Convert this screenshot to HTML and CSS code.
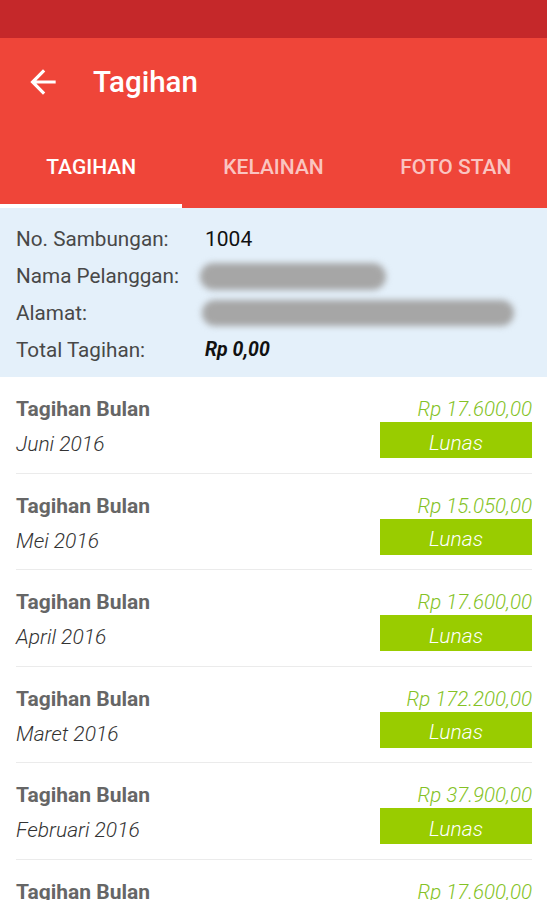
FILE: index.html
```html
<!DOCTYPE html>
<html lang="id">
<head>
    <meta charset="UTF-8">
    <meta name="viewport" content="width=device-width, initial-scale=1.0">
    <title>Tagihan</title>
    <link rel="stylesheet" href="styles.css">
</head>
<body>
    <div class="status-bar"></div>

    <div class="app-bar">
        <div class="toolbar">
            <svg class="back" viewBox="0 0 24 24" width="38" height="38">
                <path d="M20 11H7.83l5.59-5.59L12 4l-8 8 8 8 1.41-1.41L7.83 13H20v-2z" fill="#fff"/>
            </svg>
            <span class="title">Tagihan</span>
        </div>
        <div class="tabs">
            <div class="tab active">TAGIHAN</div>
            <div class="tab">KELAINAN</div>
            <div class="tab">FOTO STAN</div>
        </div>
    </div>

    <div class="info">
        <div class="info-row">
            <span class="label">No. Sambungan:</span>
            <span class="value">1004</span>
        </div>
        <div class="info-row">
            <span class="label">Nama Pelanggan:</span>
            <span class="blur blur-name"></span>
        </div>
        <div class="info-row">
            <span class="label">Alamat:</span>
            <span class="blur blur-addr"></span>
        </div>
        <div class="info-row">
            <span class="label">Total Tagihan:</span>
            <span class="value total">Rp 0,00</span>
        </div>
    </div>

    <div class="bills">
        <div class="bill">
            <div class="bill-left">
                <div class="bill-title">Tagihan Bulan</div>
                <div class="bill-month">Juni 2016</div>
            </div>
            <div class="bill-right">
                <div class="amount">Rp 17.600,00</div>
                <div class="status">Lunas</div>
            </div>
        </div>
        <div class="bill">
            <div class="bill-left">
                <div class="bill-title">Tagihan Bulan</div>
                <div class="bill-month">Mei 2016</div>
            </div>
            <div class="bill-right">
                <div class="amount">Rp 15.050,00</div>
                <div class="status">Lunas</div>
            </div>
        </div>
        <div class="bill">
            <div class="bill-left">
                <div class="bill-title">Tagihan Bulan</div>
                <div class="bill-month">April 2016</div>
            </div>
            <div class="bill-right">
                <div class="amount">Rp 17.600,00</div>
                <div class="status">Lunas</div>
            </div>
        </div>
        <div class="bill">
            <div class="bill-left">
                <div class="bill-title">Tagihan Bulan</div>
                <div class="bill-month">Maret 2016</div>
            </div>
            <div class="bill-right">
                <div class="amount">Rp 172.200,00</div>
                <div class="status">Lunas</div>
            </div>
        </div>
        <div class="bill">
            <div class="bill-left">
                <div class="bill-title">Tagihan Bulan</div>
                <div class="bill-month">Februari 2016</div>
            </div>
            <div class="bill-right">
                <div class="amount">Rp 37.900,00</div>
                <div class="status">Lunas</div>
            </div>
        </div>
        <div class="bill">
            <div class="bill-left">
                <div class="bill-title">Tagihan Bulan</div>
                <div class="bill-month">Januari 2016</div>
            </div>
            <div class="bill-right">
                <div class="amount">Rp 17.600,00</div>
                <div class="status">Lunas</div>
            </div>
        </div>
    </div>
</body>
</html>
```

FILE: styles.css
```css
html, body {
    margin: 0;
    padding: 0;
    height: 900px;
    overflow: hidden;
}
body {
    font-family: Roboto, "Noto Sans", sans-serif;
    background-color: #fff;
}
.status-bar {
    height: 38px;
    background-color: #c5282a;
}
.app-bar {
    background-color: #ef4539;
    color: #fff;
}
.toolbar {
    height: 87px;
    display: flex;
    align-items: center;
    padding-left: 24px;
}
.back {
    display: block;
}
.title {
    font-size: 29.5px;
    font-weight: 500;
    margin-left: 31px;
}
.tabs {
    display: flex;
    height: 83px;
}
.tab {
    flex: 1;
    display: flex;
    align-items: center;
    justify-content: center;
    font-size: 21px;
    font-weight: 500;
    color: rgba(255, 255, 255, 0.7);
    border-bottom: 4px solid transparent;
    box-sizing: border-box;
    padding-top: 5px;
}
.tab.active {
    color: #fff;
    border-bottom-color: #fff;
}
.info {
    background-color: #e4f0fa;
    padding: 13px 16px 9px;
}
.info-row {
    display: flex;
    align-items: center;
    height: 36.75px;
}
.label {
    width: 189px;
    font-size: 20.7px;
    color: #484848;
}
.value {
    font-size: 21px;
    color: #111;
}
.total {
    font-size: 19.5px;
    font-weight: 700;
    font-style: italic;
}
.blur {
    display: block;
    background-color: #a6a6a6;
    border-radius: 14px;
    filter: blur(3px);
}
.blur-name {
    width: 186px;
    height: 27px;
    margin-left: -5px;
}
.blur-addr {
    width: 312px;
    height: 26px;
    margin-left: -3px;
    margin-top: 1px;
}
.bills {
    padding: 0 15px 0 16px;
}
.bill {
    display: flex;
    justify-content: space-between;
    height: 96.5px;
    border-bottom: 1px solid #ebebeb;
    padding-top: 20px;
    box-sizing: border-box;
}
.bill-title {
    font-size: 21px;
    font-weight: 700;
    color: #666;
    line-height: 24px;
}
.bill-month {
    font-size: 21px;
    font-weight: 300;
    font-style: italic;
    color: #333;
    margin-top: 11px;
    line-height: 24px;
}
.bill-right {
    display: flex;
    flex-direction: column;
    align-items: flex-end;
}
.amount {
    font-size: 20.5px;
    font-weight: 300;
    font-style: italic;
    color: #84c225;
    line-height: 24px;
}
.status {
    width: 152px;
    height: 36px;
    margin-top: 1px;
    padding-top: 5px;
    box-sizing: border-box;
    background-color: #99cc00;
    color: #fff;
    font-size: 21px;
    font-weight: 300;
    font-style: italic;
    display: flex;
    align-items: center;
    justify-content: center;
}
```
